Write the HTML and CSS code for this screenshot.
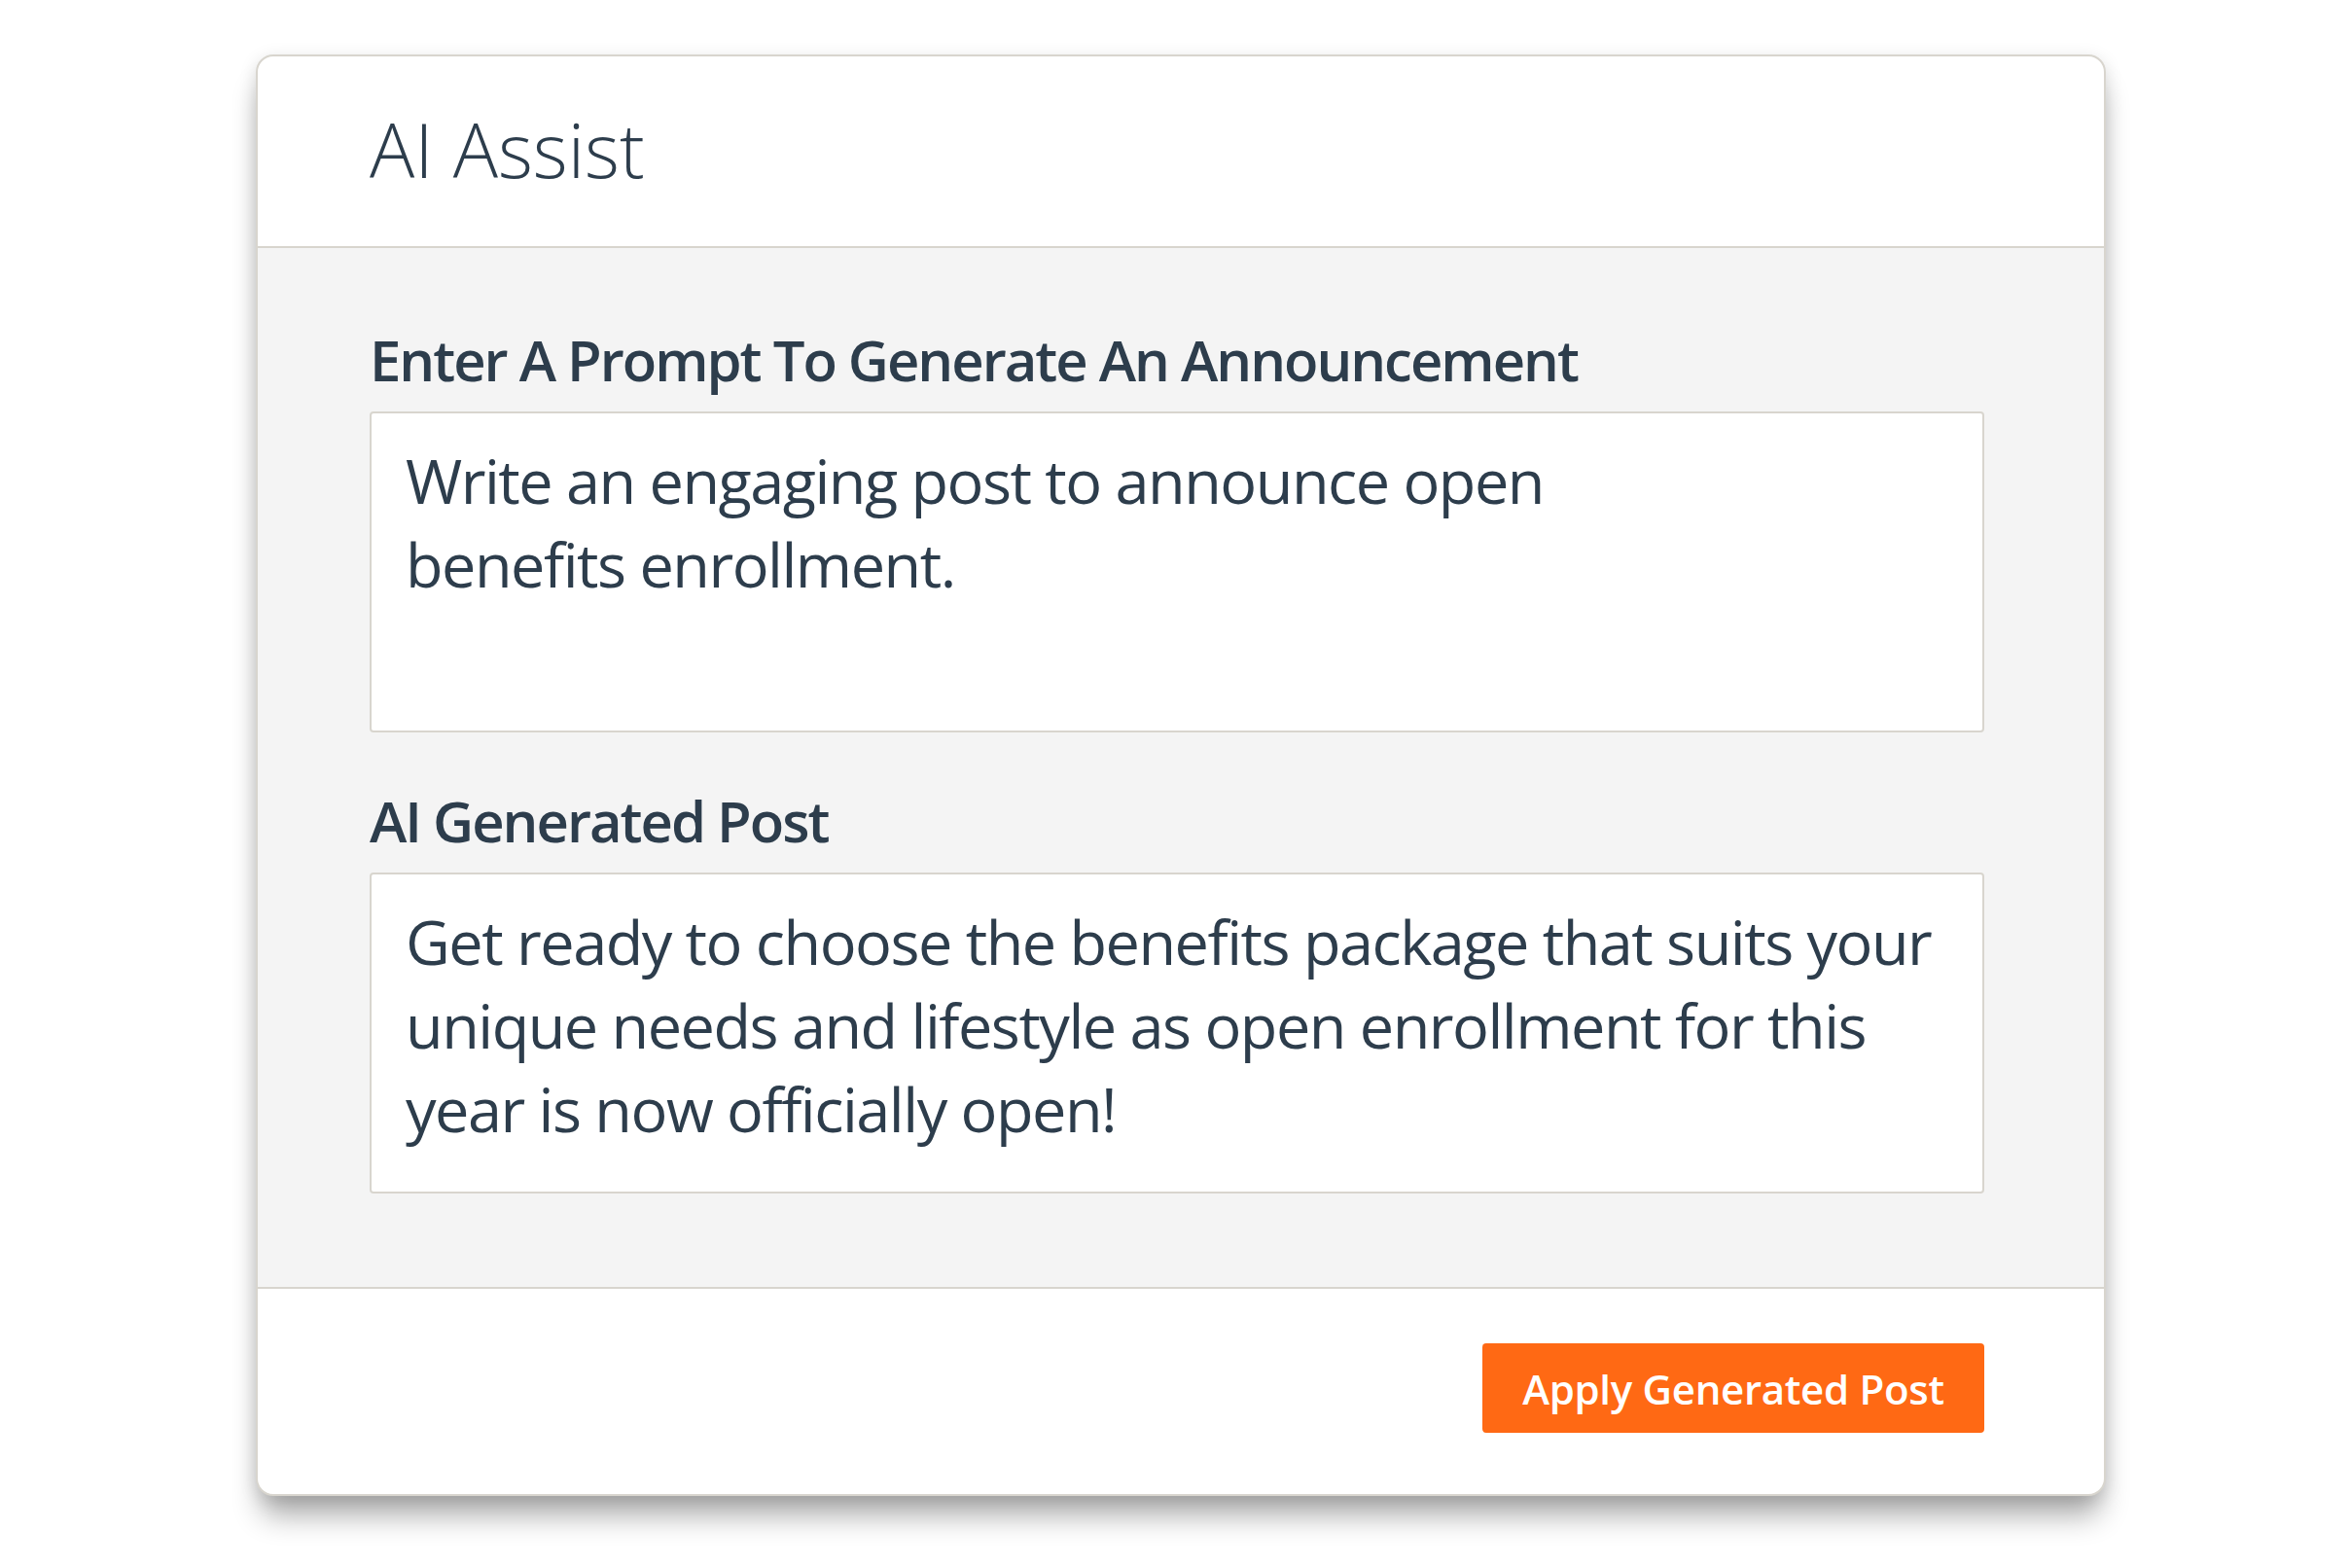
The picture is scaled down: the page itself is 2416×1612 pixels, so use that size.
FILE: index.html
```html
<!DOCTYPE html>
<html lang="en">
<head>
<meta charset="utf-8">
<title>AI Assist</title>
<link rel="stylesheet" href="styles.css">
</head>
<body>
<div class="page">
  <section class="card">
    <header class="card-header">
      <h1 class="title">AI Assist</h1>
    </header>
    <div class="card-body">
      <label class="field-label">Enter A Prompt To Generate An Announcement</label>
      <div class="field">Write an engaging post to announce open<br>benefits enrollment.</div>
      <label class="field-label second">AI Generated Post</label>
      <div class="field">Get ready to choose the benefits package that suits your<br>unique needs and lifestyle as open enrollment for this<br>year is now officially open!</div>
    </div>
    <footer class="card-footer">
      <button class="btn-primary" type="button">Apply Generated Post</button>
    </footer>
  </section>
</div>
</body>
</html>
```

FILE: styles.css
```css
html, body {
  margin: 0;
  padding: 0;
  background: #ffffff;
}

body {
  font-family: "Open Sans", "Noto Sans", "Liberation Sans", sans-serif;
  color: #2d3d4c;
}

.page {
  padding: 56px 0 72px 263px;
  min-height: 1612px;
  box-sizing: border-box;
}

.card {
  width: 1902px;
  box-sizing: border-box;
  border: 2px solid #d8d5ce;
  border-radius: 18px;
  background: #ffffff;
  box-shadow: 0 26px 30px -6px rgba(0, 0, 0, 0.32), 0 4px 18px rgba(0, 0, 0, 0.13);
  overflow: hidden;
}

.card-header {
  padding: 43px 123px 47px 115px;
  border-bottom: 2px solid #d8d5ce;
}

.title {
  margin: 0;
  font-size: 77px;
  font-weight: 300;
  line-height: 105px;
  color: #2d3d4c;
}

.card-body {
  background: #f4f4f4;
  padding: 75px 123px 96px 115px;
  display: flex;
  flex-direction: column;
}

.field-label {
  display: block;
  font-size: 58px;
  font-weight: 600;
  line-height: 79px;
  letter-spacing: -2px;
  color: #2d3d4c;
  margin-bottom: 14px;
}

.field-label.second {
  margin-top: 51px;
}

.field {
  box-sizing: border-box;
  height: 330px;
  background: #ffffff;
  border: 2px solid #d8d5ce;
  border-radius: 4px;
  padding: 26px 30px 0 35px;
  font-size: 63px;
  font-weight: 400;
  line-height: 86px;
  letter-spacing: -1.5px;
  color: #2d3d4c;
  white-space: nowrap;
}

.card-footer {
  padding: 56px 123px 63px 115px;
  border-top: 2px solid #d8d5ce;
  display: flex;
  justify-content: flex-end;
}

.btn-primary {
  width: 516px;
  height: 92px;
  border: none;
  border-radius: 4px;
  background: #ff6914;
  color: #ffffff;
  font-family: "Open Sans", "Noto Sans", "Liberation Sans", sans-serif;
  font-size: 42px;
  font-weight: 600;
  letter-spacing: -0.3px;
  padding: 0;
  cursor: pointer;
}
```
